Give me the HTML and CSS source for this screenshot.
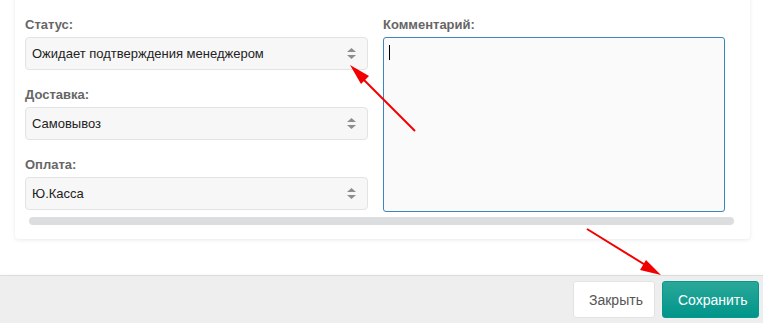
FILE: index.html
```html
<!DOCTYPE html>
<html lang="ru">
<head>
    <meta charset="UTF-8">
    <title>Заказ</title>
    <link rel="stylesheet" href="styles.css">
</head>
<body>

<div class="modal">
    <!-- Form body -->
    <div class="modal-body">
        <div class="card">
            <div class="fields">
                <div class="col">
                    <label class="label">Статус:</label>
                    <div class="select">
                        <span>Ожидает подтверждения менеджером</span>
                        <svg class="caret" width="9" height="11" viewBox="0 0 9 11"><path d="M4.5 0 L9 4 L0 4 Z M0 7 L9 7 L4.5 11 Z" fill="#8e8e8e"/></svg>
                    </div>

                    <label class="label">Доставка:</label>
                    <div class="select">
                        <span>Самовывоз</span>
                        <svg class="caret" width="9" height="11" viewBox="0 0 9 11"><path d="M4.5 0 L9 4 L0 4 Z M0 7 L9 7 L4.5 11 Z" fill="#8e8e8e"/></svg>
                    </div>

                    <label class="label">Оплата:</label>
                    <div class="select">
                        <span>Ю.Касса</span>
                        <svg class="caret" width="9" height="11" viewBox="0 0 9 11"><path d="M4.5 0 L9 4 L0 4 Z M0 7 L9 7 L4.5 11 Z" fill="#8e8e8e"/></svg>
                    </div>
                </div>
                <div class="col">
                    <label class="label">Комментарий:</label>
                    <div class="textarea"><span class="cursor"></span></div>
                </div>
            </div>
            <div class="scrollbar"></div>
        </div>
    </div>

    <!-- Buttons -->
    <div class="modal-footer">
        <button class="btn btn-close">Закрыть</button>
        <button class="btn btn-save">Сохранить</button>
    </div>
</div>

<!-- Red annotation arrows -->
<svg class="arrows" width="763" height="330" viewBox="0 0 763 330">
    <line x1="415" y1="131" x2="360" y2="76" stroke="#f20000" stroke-width="2"/>
    <path d="M350 65 L369 76 L361 84 Z" fill="#f20000"/>
    <line x1="587" y1="229" x2="647" y2="266" stroke="#f20000" stroke-width="2"/>
    <path d="M661 275 L640 270 L646 260 Z" fill="#f20000"/>
</svg>

</body>
</html>
```

FILE: styles.css
```css
body {
    margin: 0;
    padding: 0;
    font-family: "Liberation Sans", Arial, sans-serif;
    background-color: #fff;
    color: #222;
}
.modal {
    width: 763px;
}
.modal-body {
    height: 285px;
    padding: 0 13px 0 15px;
}
.card {
    margin-top: -10px;
    padding: 26px 24px 14px 10px;
    background-color: #fff;
    border-radius: 4px;
    box-shadow: 0 1px 4px rgba(0, 0, 0, 0.09);
}
.fields {
    display: grid;
    grid-template-columns: 343px 342px;
    column-gap: 15px;
}
.col {
    display: flex;
    flex-direction: column;
}
.label {
    display: block;
    font-size: 13px;
    font-weight: bold;
    line-height: 17px;
    color: #666;
    margin-bottom: 4px;
}
.select {
    height: 33px;
    box-sizing: border-box;
    display: flex;
    align-items: center;
    justify-content: space-between;
    padding: 0 11px 0 6px;
    margin-bottom: 16px;
    font-size: 13px;
    background-color: #f7f7f7;
    border: 1px solid #e3e3e3;
    border-radius: 4px;
}
.select:last-child {
    margin-bottom: 0;
}
.textarea {
    height: 175px;
    box-sizing: border-box;
    padding: 7px 5px;
    background-color: #fafafa;
    border: 1px solid #3a86c0;
    border-radius: 3px;
}
.cursor {
    display: block;
    width: 1px;
    height: 15px;
    background-color: #000;
}
.scrollbar {
    margin: 5px 0 0 4px;
    width: 705px;
    height: 8px;
    border-radius: 4px;
    background-color: #dcdddf;
}
.modal-footer {
    display: flex;
    justify-content: flex-end;
    gap: 7px;
    padding: 5px 4px 5px 0;
    background-color: #eee;
    border-top: 1px solid #dcdcdc;
    border-radius: 0 0 3px 3px;
    box-shadow: 0 3px 6px rgba(0, 0, 0, 0.14);
}
.btn {
    height: 37px;
    padding: 0 15px;
    font-family: "Liberation Sans", Arial, sans-serif;
    font-size: 14px;
    border-radius: 3px;
    cursor: pointer;
}
.btn-close {
    width: 82px;
    color: #555;
    background-color: #fff;
    border: 1px solid #e2e2e2;
}
.btn-save {
    width: 97px;
    color: #fff;
    background: linear-gradient(#2aa899, #00958a);
    border: 1px solid #04998d;
}
.arrows {
    position: absolute;
    top: 0;
    left: 0;
    pointer-events: none;
}
```
